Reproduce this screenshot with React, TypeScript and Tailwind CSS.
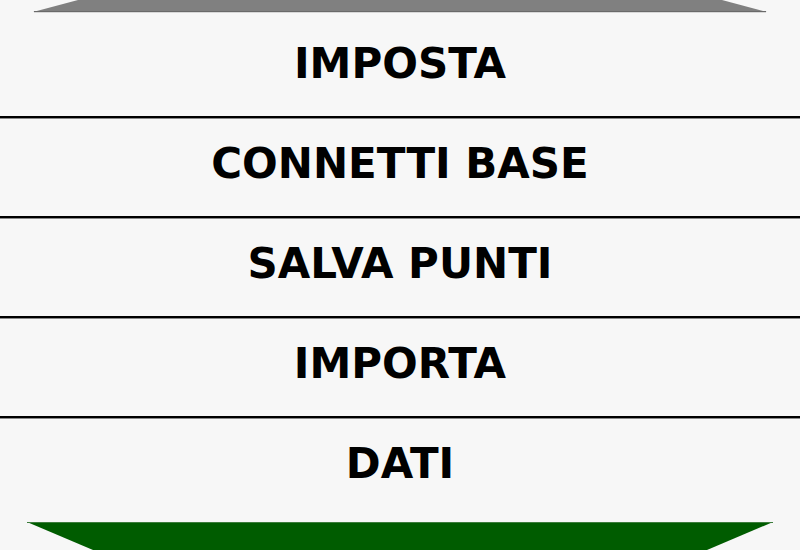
const ITEMS = ["IMPOSTA", "CONNETTI BASE", "SALVA PUNTI", "IMPORTA", "DATI"];

function Separator() {
  return (
    <div>
      <div className="h-[2px] bg-black" />
      <div className="h-px bg-[#8a8a8a]" />
    </div>
  );
}

function MenuRow({ label }: { label: string }) {
  return (
    <div className="flex h-[97px] items-center justify-center pb-[7px]">
      <span className="text-[42px] font-bold leading-none text-black">{label}</span>
    </div>
  );
}

export default function App() {
  return (
    <div className="flex h-[550px] w-[800px] flex-col overflow-hidden bg-[#f7f7f7] font-['DejaVu_Sans',sans-serif]">
      {/* scroll-up tab */}
      <svg width="800" height="19" className="block shrink-0">
        <polygon points="78,0 722,0 767,12 33,12" fill="#808080" />
        <line x1="34" y1="11.5" x2="766" y2="11.5" stroke="#6a6a6a" strokeWidth="1" />
        <line x1="34" y1="12.5" x2="766" y2="12.5" stroke="#d8d8d8" strokeWidth="1" />
      </svg>

      {ITEMS.map((label, i) => (
        <div key={label}>
          {i > 0 && <Separator />}
          <MenuRow label={label} />
        </div>
      ))}

      {/* scroll-down tab */}
      <svg width="800" height="34" className="block shrink-0">
        <polygon points="27,6 773,6 707,34 93,34" fill="#005c00" />
        <line x1="27" y1="6.5" x2="773" y2="6.5" stroke="#3d7d3d" strokeWidth="1" />
      </svg>
    </div>
  );
}
